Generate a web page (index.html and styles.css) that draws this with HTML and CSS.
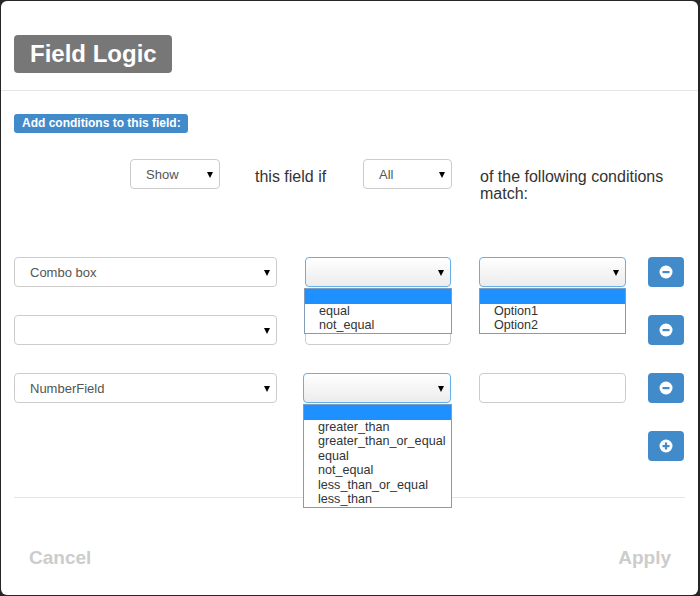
FILE: index.html
```html
<!DOCTYPE html>
<html>
<head>
<meta charset="utf-8">
<link rel="stylesheet" href="styles.css">
</head>
<body>
<div class="modal">
  <div class="header">
    <h1 class="title">Field Logic</h1>
  </div>
  <div class="body">
    <span class="label">Add conditions to this field:</span>
    <div class="logic">
      <div class="select sel-show"><span>Show</span><i class="caret"></i></div>
      <div class="text t1">this field if</div>
      <div class="select sel-all"><span>All</span><i class="caret"></i></div>
      <div class="text t2">of the following conditions match:</div>
    </div>
    <div class="conds">
      <div class="row">
        <div class="select c1"><span>Combo box</span><i class="caret"></i></div>
        <div class="cell c2">
          <div class="select open"><i class="caret"></i></div>
          <ul class="list l1">
            <li class="hl">&nbsp;</li>
            <li>equal</li>
            <li>not_equal</li>
          </ul>
        </div>
        <div class="cell c3">
          <div class="select open"><i class="caret"></i></div>
          <ul class="list l2">
            <li class="hl">&nbsp;</li>
            <li>Option1</li>
            <li>Option2</li>
          </ul>
        </div>
        <button class="btn"><svg width="14" height="14" viewBox="0 0 14 14"><circle cx="7" cy="7" r="6.5" fill="#fff"/><rect x="3.5" y="6" width="7" height="2.2" fill="#428bca"/></svg></button>
      </div>
      <div class="row">
        <div class="select c1"><span></span><i class="caret"></i></div>
        <div class="cell c2"><div class="input"></div></div>
        <div class="cell c3"></div>
        <button class="btn"><svg width="14" height="14" viewBox="0 0 14 14"><circle cx="7" cy="7" r="6.5" fill="#fff"/><rect x="3.5" y="6" width="7" height="2.2" fill="#428bca"/></svg></button>
      </div>
      <div class="row">
        <div class="select c1"><span>NumberField</span><i class="caret"></i></div>
        <div class="cell c2 wide">
          <div class="select open"><i class="caret"></i></div>
          <ul class="list l3">
            <li class="hl">&nbsp;</li>
            <li>greater_than</li>
            <li>greater_than_or_equal</li>
            <li>equal</li>
            <li>not_equal</li>
            <li>less_than_or_equal</li>
            <li>less_than</li>
          </ul>
        </div>
        <div class="cell c3"><div class="input"></div></div>
        <button class="btn"><svg width="14" height="14" viewBox="0 0 14 14"><circle cx="7" cy="7" r="6.5" fill="#fff"/><rect x="3.5" y="6" width="7" height="2.2" fill="#428bca"/></svg></button>
      </div>
      <div class="row">
        <button class="btn"><svg width="14" height="14" viewBox="0 0 14 14"><circle cx="7" cy="7" r="6.5" fill="#fff"/><rect x="3.5" y="6" width="7" height="2.2" fill="#428bca"/><rect x="5.9" y="3.5" width="2.2" height="7" fill="#428bca"/></svg></button>
      </div>
    </div>
  </div>
  <div class="footer">
    <span class="fbtn">Cancel</span>
    <span class="fbtn">Apply</span>
  </div>
</div>
</body>
</html>
```
FILE: styles.css
```css
* { box-sizing: border-box; }
html, body { margin: 0; padding: 0; }
body {
  background: #262626;
  width: 700px;
  height: 596px;
  overflow: hidden;
  padding: 1px 2px 1px 1px;
  font-family: "Liberation Sans", Arial, sans-serif;
  color: #333;
}
.modal {
  background: #fff;
  width: 697px;
  height: 594px;
  border-radius: 6px;
  display: flex;
  flex-direction: column;
}
.header {
  padding: 34px 13px 17px;
  border-bottom: 1px solid #e5e5e5;
}
.title {
  margin: 0;
  display: inline-block;
  background: #777;
  color: #fff;
  font-size: 24px;
  font-weight: bold;
  height: 38px;
  line-height: 38px;
  padding: 0 15px 0 16px;
  border-radius: 4px;
}
.body {
  padding: 23px 13px 0 13px;
}
.label {
  display: inline-block;
  background: #428bca;
  color: #fff;
  font-size: 12px;
  font-weight: bold;
  height: 19px;
  line-height: 19px;
  padding: 0 7px 0 8px;
  border-radius: 3px;
  vertical-align: top;
}
.logic {
  display: flex;
  align-items: flex-start;
  height: 30px;
  margin-top: 26px;
}
.select {
  position: relative;
  height: 30px;
  border: 1px solid #ccc;
  border-radius: 4px;
  background: #fff;
  font-size: 13px;
  color: #555;
  line-height: 29px;
  padding-left: 15px;
}
.caret {
  position: absolute;
  right: 6px;
  top: 12px;
  width: 0;
  height: 0;
  border-left: 3.5px solid transparent;
  border-right: 3.5px solid transparent;
  border-top: 6px solid #000;
}
.sel-show { width: 90px; margin-left: 116px; flex: none; }
.sel-all { width: 89px; flex: none; }
.text {
  font-size: 16px;
  line-height: 17px;
  padding-top: 9px;
  color: #333;
}
.t1 { margin-left: 35px; width: 108px; flex: none; }
.t2 { margin-left: 28px; width: 200px; flex: none; }
.conds {
  margin-top: 68px;
  display: flex;
  flex-direction: column;
  gap: 28px;
}
.row {
  display: flex;
  height: 30px;
}
.c1 { width: 263px; flex: none; }
.cell { position: relative; flex: none; height: 30px; }
.c2 { width: 146px; margin-left: 28px; }
.c2.wide { width: 148px; margin-left: 26px; }
.c3 { width: 147px; margin-left: 28px; }
.cell .select { width: 100%; }
.select.open {
  border-color: #66afe9;
  background: linear-gradient(#fff, #ececec);
}
.input {
  height: 30px;
  border: 1px solid #ccc;
  border-radius: 4px;
  background: #fff;
}
.list {
  position: absolute;
  left: 0;
  top: 31px;
  margin: 0;
  padding: 0;
  list-style: none;
  background: #fff;
  border: 1px solid #7f9db9;
  font-size: 12.6px;
  color: #333;
  z-index: 2;
}
.list li {
  height: 14.5px;
  line-height: 14.5px;
  padding-left: 14px;
  white-space: nowrap;
}
.list li.hl { background: #1e90ff; }
.l1 { left: -1px; width: 148px; }
.l2 { width: 147px; }
.l3 { width: 149px; }
.btn {
  flex: none;
  margin-left: auto;
  width: 36px;
  height: 30px;
  border: none;
  border-radius: 4px;
  background: #428bca;
  display: flex;
  align-items: center;
  justify-content: center;
  padding: 0;
  margin-right: 1px;
}
.footer {
  margin: 36px 13px 0 13px;
  border-top: 1px solid #e5e5e5;
  padding: 50px 14px 0 15px;
  display: flex;
  justify-content: space-between;
}
.fbtn {
  font-size: 19px;
  font-weight: bold;
  color: #ccc;
  line-height: 20px;
}
```
